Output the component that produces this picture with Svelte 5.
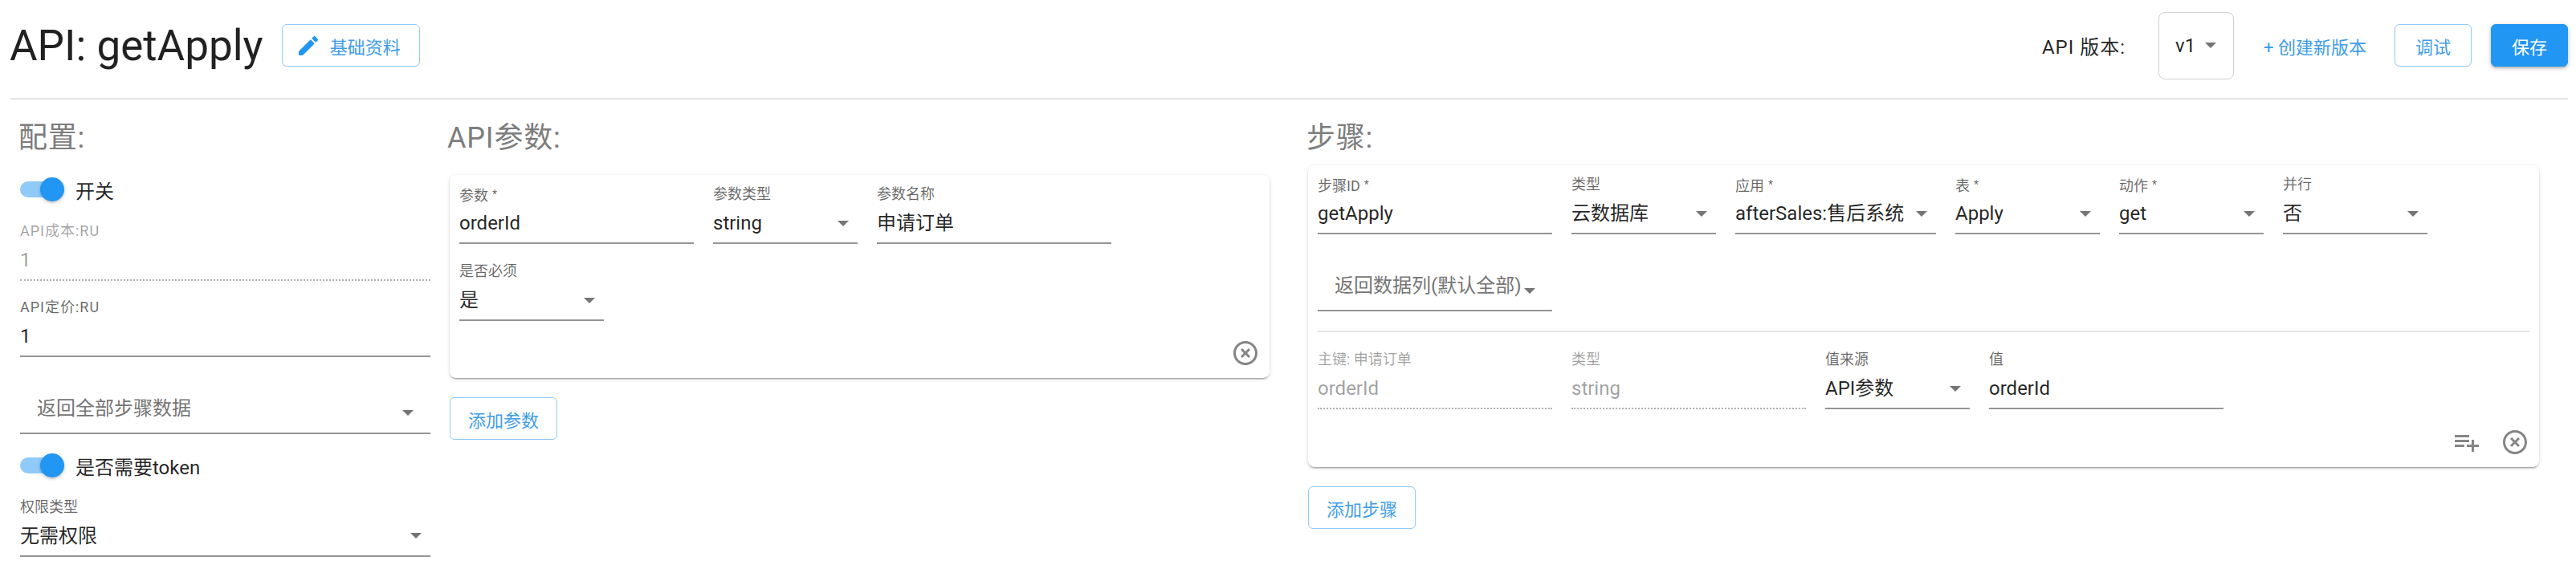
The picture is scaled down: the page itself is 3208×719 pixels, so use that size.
<script>
  const CLOSE = 'M12,20C7.59,20 4,16.41 4,12C4,7.59 7.59,4 12,4C16.41,4 20,7.59 20,12C20,16.41 16.41,20 12,20M12,2C6.47,2 2,6.47 2,12C2,17.53 6.47,22 12,22C17.53,22 22,17.53 22,12C22,6.47 17.53,2 12,2M14.59,8L12,10.59L9.41,8L8,9.41L10.59,12L8,14.59L9.41,16L12,13.41L14.59,16L16,14.59L13.41,12L16,9.41L14.59,8Z';
  const PLAYLIST = 'M2,16H10V14H2M18,14V10H16V14H12V16H16V20H18V16H22V14M14,6H2V8H14M14,10H2V12H14V10Z';
  const PENCIL = 'M20.71,7.04C21.1,6.65 21.1,6 20.71,5.63L18.37,3.29C18,2.9 17.35,2.9 16.96,3.29L15.12,5.12L18.87,8.87M3,17.25V21H6.75L17.81,9.93L14.06,6.18L3,17.25Z';

  const paramFields = [
    {label: '参数', required: true, value: 'orderId', cls: 'w292'},
    {label: '参数类型', value: 'string', select: true, cls: 'w180'},
    {label: '参数名称', value: '申请订单', cls: 'w292'},
    {label: '是否必须', value: '是', select: true, cls: 'w180'}
  ];

  const stepFields = [
    {label: '步骤ID', required: true, value: 'getApply', cls: 'w292'},
    {label: '类型', value: '云数据库', select: true, cls: 'w180'},
    {label: '应用', required: true, value: 'afterSales:售后系统', select: true, cls: 'w250'},
    {label: '表', required: true, value: 'Apply', select: true, cls: 'w180'},
    {label: '动作', required: true, value: 'get', select: true, cls: 'w180'},
    {label: '并行', value: '否', select: true, cls: 'w180'},
    {value: '返回数据列(默认全部)', select: true, placeholder: true, cls: 'w292'}
  ];

  const keyFields = [
    {label: '主键: 申请订单', value: 'orderId', disabled: true, cls: 'w292'},
    {label: '类型', value: 'string', disabled: true, cls: 'w292'},
    {label: '值来源', value: 'API参数', select: true, cls: 'w180'},
    {label: '值', value: 'orderId', cls: 'w292'}
  ];
</script>

{#snippet field(f)}
  <div class="field {f.cls}" class:disabled={f.disabled} class:placeholder={f.placeholder} class:spaced={f.spaced}>
    <div class="field__label">
      {f.label ?? ''}{#if f.required}<span class="star">*</span>{/if}
    </div>
    <div class="field__control">
      <span class="field__value">{f.value}</span>
      {#if f.select}<i class="arrow"></i>{/if}
    </div>
  </div>
{/snippet}

{#snippet icon(path)}
  <svg class="icon" viewBox="0 0 24 24"><path d={path} /></svg>
{/snippet}

{#snippet toggle(text)}
  <div class="switch">
    <span class="switch__track"><span class="switch__thumb"></span></span>
    <span class="switch__label">{text}</span>
  </div>
{/snippet}

<div class="page">
  <header class="header">
    <h1 class="title">API: getApply</h1>
    <button class="btn btn--edit">
      <svg class="pencil" viewBox="0 0 24 24"><path d={PENCIL} /></svg>
      基础资料
    </button>

    <div class="header__right">
      <span class="version-label">API 版本:</span>
      <div class="version"><span>v1</span><i class="arrow"></i></div>
      <span class="new-version">+ 创建新版本</span>
      <button class="btn btn--wide">调试</button>
      <button class="btn btn--wide btn--primary">保存</button>
    </div>
  </header>

  <main class="columns">
    <section class="config">
      <h2 class="heading">配置:</h2>
      <div class="stack">
        {@render toggle('开关')}
        {@render field({label: 'API成本:RU', value: '1', disabled: true, spaced: true})}
        {@render field({label: 'API定价:RU', value: '1', spaced: true})}
        {@render field({value: '返回全部步骤数据', select: true, placeholder: true})}
        {@render toggle('是否需要token')}
        {@render field({label: '权限类型', value: '无需权限', select: true})}
      </div>
    </section>

    <section>
      <h2 class="heading">API参数:</h2>
      <div class="card">
        <div class="fields">
          {#each paramFields as f}
            {@render field(f)}
          {/each}
        </div>
        <div class="card__actions">
          {@render icon(CLOSE)}
        </div>
      </div>
      <button class="btn btn--add">添加参数</button>
    </section>

    <section class="steps">
      <h2 class="heading heading--steps">步骤:</h2>
      <div class="card">
        <div class="fields">
          {#each stepFields as f}
            {@render field(f)}
          {/each}
        </div>
        <hr class="card__divider" />
        <div class="fields">
          {#each keyFields as f}
            {@render field(f)}
          {/each}
        </div>
        <div class="card__actions card__actions--steps">
          {@render icon(PLAYLIST)}
          {@render icon(CLOSE)}
        </div>
      </div>
      <button class="btn btn--add btn--step">添加步骤</button>
    </section>
  </main>
</div>

<style>
  :global(body) {
    background: #fff;
  }

  .page {
    width: 3208px;
    height: 719px;
    overflow: hidden;
    box-sizing: border-box;
    padding: 0 10px 0 13px;
    font-family: Roboto, "Noto Sans CJK SC", sans-serif;
    font-size: 24px;
    color: rgba(0, 0, 0, 0.87);
  }

  .header {
    display: flex;
    align-items: center;
    height: 124px;
    box-sizing: border-box;
    padding-bottom: 9px;
    border-bottom: 2px solid #e4e4e4;
  }

  .title {
    margin: 0 23px 0 -1px;
    font-size: 53px;
    font-weight: 400;
    line-height: 60px;
  }

  .header__right {
    display: flex;
    align-items: center;
    margin-left: auto;
  }

  .version-label {
    margin-right: 41px;
    letter-spacing: 1px;
  }

  .version {
    display: flex;
    align-items: center;
    justify-content: space-between;
    box-sizing: border-box;
    width: 94px;
    height: 84px;
    padding: 0 21px 0 20px;
    margin-right: 37px;
    border: 1px solid #d0d0d0;
    border-radius: 8px;
  }

  .new-version {
    margin-right: 35px;
    font-size: 22px;
    color: #3f9de9;
  }

  .btn {
    display: inline-flex;
    align-items: center;
    justify-content: center;
    box-sizing: border-box;
    height: 53px;
    padding: 0 22px;
    font-family: inherit;
    font-size: 22px;
    color: #3f9de9;
    background: #fff;
    border: 1px solid #90caf9;
    border-radius: 6px;
  }

  .btn--edit {
    padding: 0 23px 0 16px;
    gap: 11px;
  }

  .btn--wide {
    width: 96px;
    padding: 0;
    margin-left: 24px;
  }

  .new-version + .btn--wide {
    margin-left: 0;
  }

  .btn--primary {
    color: #fff;
    background: #2196f3;
    border-color: #2196f3;
    box-shadow: 0 3px 3px -2px rgba(0, 0, 0, 0.2), 0 2px 4px rgba(0, 0, 0, 0.14), 0 1px 8px rgba(0, 0, 0, 0.12);
  }

  .btn--add {
    margin-top: 24px;
  }

  .pencil {
    width: 32px;
    height: 32px;
    fill: #2196f3;
  }

  .columns {
    display: grid;
    grid-template-columns: 511px 1021px 1557px;
    column-gap: 24px;
    margin-left: 12px;
    padding-top: 24px;
  }

  .steps {
    margin-left: 24px;
  }

  .heading {
    height: 48px;
    margin: 0 0 22px;
    font-size: 36px;
    font-weight: 400;
    line-height: 48px;
    letter-spacing: 0.8px;
    color: #7d7d7d;
  }

  .config .heading {
    margin-left: -2px;
  }

  .heading--steps {
    margin: 0 0 10px -2px;
  }

  section:nth-child(2) .heading {
    margin-left: -3px;
  }

  .stack {
    display: flex;
    flex-direction: column;
    gap: 21.5px;
  }

  .switch {
    display: flex;
    align-items: center;
    gap: 14px;
    height: 36px;
  }

  .switch__track {
    position: relative;
    width: 55px;
    height: 20px;
    background: linear-gradient(to right, #90caf9 85%, transparent 85%);
    border-radius: 10px;
  }

  .switch__thumb {
    position: absolute;
    top: -5px;
    right: 0;
    width: 30px;
    height: 30px;
    background: #2196f3;
    border-radius: 50%;
    box-shadow: 0 2px 4px -1px rgba(0, 0, 0, 0.2), 0 1px 4px rgba(0, 0, 0, 0.14);
  }

  .field__label {
    height: 24px;
    font-size: 18px;
    line-height: 24px;
    color: rgba(0, 0, 0, 0.6);
    white-space: nowrap;
  }

  .spaced .field__label {
    letter-spacing: 1px;
  }

  .star {
    margin-left: 5px;
    font-size: 14px;
    vertical-align: 3px;
  }

  .field__control {
    display: flex;
    align-items: center;
    justify-content: space-between;
    box-sizing: border-box;
    height: 50px;
    padding-right: 11px;
    line-height: 48px;
    white-space: nowrap;
    border-bottom: 2px solid #949494;
  }

  .disabled .field__label,
  .disabled .field__control {
    color: rgba(0, 0, 0, 0.38);
  }

  .disabled .field__control {
    border-bottom: 2px dotted #b0b0b0;
  }

  .placeholder .field__control {
    padding-right: 21px;
    color: #757575;
  }

  .placeholder .field__value {
    padding: 0 0 12px 21px;
  }

  .arrow {
    flex: none;
    width: 0;
    height: 0;
    border-top: 7px solid #757575;
    border-left: 7px solid transparent;
    border-right: 7px solid transparent;
  }

  .w292 {
    width: 292px;
  }

  .w250 {
    width: 250px;
  }

  .w180 {
    width: 180px;
  }

  .card {
    box-sizing: border-box;
    padding: 12px 12px 13px;
    background: #fff;
    border-radius: 8px;
    box-shadow: 0 3px 1px -2px rgba(0, 0, 0, 0.2), 0 2px 2px rgba(0, 0, 0, 0.14), 0 1px 5px rgba(0, 0, 0, 0.12);
  }

  .fields {
    display: flex;
    flex-wrap: wrap;
    gap: 22px 24px;
  }

  .card__divider {
    height: 2px;
    margin: 24px 0 22px;
    background: #e4e4e4;
    border: 0;
  }

  .card__actions {
    display: flex;
    justify-content: flex-end;
    gap: 24px;
    margin-top: 22px;
  }

  .card__actions--steps {
    margin-top: 23px;
  }

  .icon {
    width: 36px;
    height: 36px;
    fill: #858585;
  }
</style>
